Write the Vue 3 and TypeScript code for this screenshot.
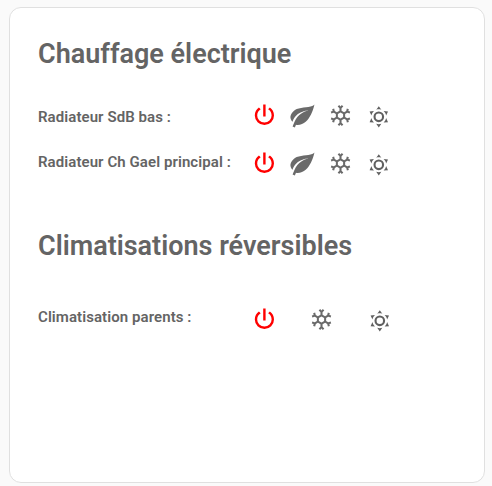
<script setup lang="ts">
type IconName = 'power' | 'leaf' | 'snow' | 'sun'

interface Row {
  label: string
  modes: IconName[]
}

interface Section {
  title: string
  kind: string
  rows: Row[]
}

const paths: Record<IconName, string> = {
  power:
    'M16.56,5.44L15.11,6.89C16.84,7.94 18,9.83 18,12A6,6 0 0,1 12,18A6,6 0 0,1 6,12C6,9.83 7.16,7.94 8.88,6.88L7.44,5.44C5.36,6.88 4,9.28 4,12A8,8 0 0,0 12,20A8,8 0 0,0 20,12C20,9.28 18.64,6.88 16.56,5.44M13,3H11V13H13V3Z',
  leaf:
    'M17,8C8,10 5.9,16.17 3.82,21.34L5.71,22L6.66,19.7C7.14,19.87 7.64,20 8,20C19,20 22,3 22,3C21,5 14,5.25 9,6.25C4,7.25 2,11.5 2,13.5C2,15.5 3.75,17.25 3.75,17.25C7,8 17,8 17,8Z',
  snow:
    'M20.79,13.95L18.46,14.57L16.46,13.44V10.56L18.46,9.43L20.79,10.05L21.31,8.12L19.54,7.65L20,5.88L18.07,5.36L17.45,7.69L15.45,8.82L13,7.38V5.12L14.71,3.41L13.29,2L12,3.29L10.71,2L9.29,3.41L11,5.12V7.38L8.5,8.82L6.5,7.69L5.92,5.36L4,5.88L4.47,7.65L2.7,8.12L3.22,10.05L5.55,9.43L7.55,10.56V13.45L5.55,14.58L3.22,13.96L2.7,15.89L4.47,16.36L4,18.12L5.93,18.64L6.55,16.31L8.55,15.18L11,16.62V18.88L9.29,20.59L10.71,22L12,20.71L13.29,22L14.7,20.59L13,18.88V16.62L15.5,15.17L17.5,16.3L18.12,18.63L20,18.12L19.53,16.35L21.3,15.88L20.79,13.95M9.5,10.56L12,9.11L14.5,10.56V13.44L12,14.89L9.5,13.44V10.56Z',
  sun:
    'M12,7A5,5 0 0,1 17,12A5,5 0 0,1 12,17A5,5 0 0,1 7,12A5,5 0 0,1 12,7M12,9A3,3 0 0,0 9,12A3,3 0 0,0 12,15A3,3 0 0,0 15,12A3,3 0 0,0 12,9M12,2L14.39,5.42C13.65,5.15 12.84,5 12,5C11.16,5 10.35,5.15 9.61,5.42L12,2M3.34,7L7.5,6.65C6.9,7.16 6.36,7.78 5.94,8.5C5.5,9.24 5.25,10 5.11,10.79L3.34,7M3.36,17L5.12,13.23C5.26,14 5.53,14.78 5.95,15.5C6.37,16.24 6.91,16.86 7.5,17.37L3.36,17M20.65,7L18.88,10.79C18.74,10 18.47,9.23 18.05,8.5C17.63,7.78 17.1,7.15 16.5,6.64L20.65,7M20.64,17L16.5,17.36C17.09,16.85 17.62,16.22 18.04,15.5C18.46,14.77 18.73,14 18.87,13.21L20.64,17M12,22L9.59,18.56C10.33,18.83 11.14,19 12,19C12.82,19 13.63,18.83 14.37,18.56L12,22Z',
}

const sections: Section[] = [
  {
    title: 'Chauffage électrique',
    kind: 'heating',
    rows: [
      { label: 'Radiateur SdB bas :', modes: ['power', 'leaf', 'snow', 'sun'] },
      { label: 'Radiateur Ch Gael principal :', modes: ['power', 'leaf', 'snow', 'sun'] },
    ],
  },
  {
    title: 'Climatisations réversibles',
    kind: 'cooling',
    rows: [{ label: 'Climatisation parents :', modes: ['power', 'snow', 'sun'] }],
  },
]
</script>

<template>
  <main class="page">
    <article class="card">
      <section v-for="section in sections" :key="section.kind" :class="section.kind">
        <h2 class="title">{{ section.title }}</h2>
        <div class="body">
          <div class="labels">
            <span v-for="row in section.rows" :key="row.label" class="label">{{ row.label }}</span>
          </div>
          <div class="controls">
            <div v-for="row in section.rows" :key="row.label" class="modes">
              <span v-for="mode in row.modes" :key="mode" class="mode">
                <svg :class="['icon', mode]" viewBox="0 0 24 24"><path :d="paths[mode]" /></svg>
              </span>
            </div>
          </div>
        </div>
      </section>
    </article>
  </main>
</template>

<style>
body {
  background: #fafafa;
}
</style>

<style scoped>
.page {
  box-sizing: border-box;
  height: 486px;
  padding: 7px 7px 3px 9px;
  font-family: Roboto, sans-serif;
  color: #646464;
}
.card {
  box-sizing: border-box;
  height: 476px;
  padding: 26px 28px;
  background: #fff;
  border: 1px solid #e0e0e0;
  border-radius: 12px;
}
.title {
  margin: 0;
  font-size: 27px;
  line-height: 40px;
  font-weight: 600;
}
.body {
  display: flex;
  align-items: flex-start;
  margin-top: 27px;
}
.labels {
  display: flex;
  flex-direction: column;
  gap: 16px;
  width: 212px;
  padding-top: 2px;
}
.controls {
  display: flex;
  flex-direction: column;
  gap: 19px;
}
.cooling {
  margin-top: 48px;
}
.cooling .body {
  margin-top: 37px;
}
.cooling .labels {
  padding-top: 0;
}
.label {
  font-size: 15px;
  line-height: 29px;
  font-weight: 600;
  letter-spacing: 0.08px;
  white-space: nowrap;
}
.modes {
  display: flex;
  justify-content: space-between;
  width: 144px;
  height: 29px;
}
.cooling .modes {
  margin-top: 2px;
}
.mode {
  display: flex;
  align-items: center;
  justify-content: center;
  width: 29px;
  height: 29px;
}
.icon {
  display: block;
  flex: none;
  width: 28.8px;
  height: 28.8px;
  fill: #6a6a6a;
}
.power {
  fill: #f00;
}
.snow {
  width: 25px;
  height: 25px;
  margin-right: 1px;
}
.sun {
  width: 25.6px;
  height: 25.6px;
  margin-top: 1.6px;
  margin-right: 0.4px;
  fill: #606060;
}
</style>
